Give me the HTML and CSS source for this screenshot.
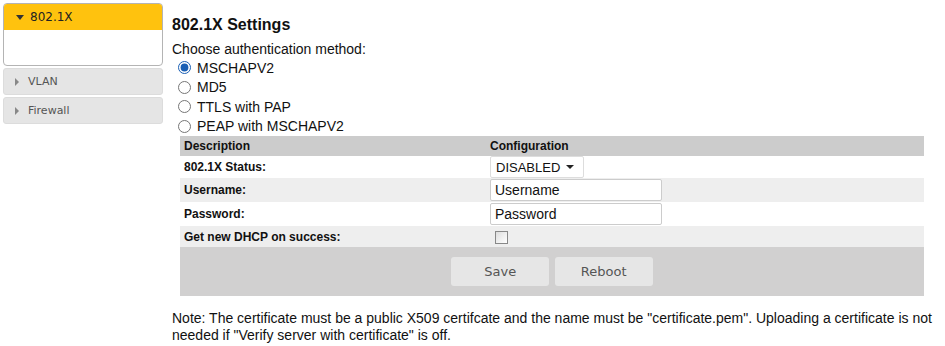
FILE: index.html
```html
<!DOCTYPE html>
<html lang="en">
<head>
    <meta charset="UTF-8">
    <title>802.1X Settings</title>
    <link rel="stylesheet" href="styles.css">
</head>
<body>
    <div class="page">
        <nav class="sidebar">
            <div class="menu open">
                <div class="menu-head"><span class="caret down"></span>802.1X</div>
                <div class="menu-body"></div>
            </div>
            <div class="menu"><div class="menu-head"><span class="caret"></span>VLAN</div></div>
            <div class="menu"><div class="menu-head"><span class="caret"></span>Firewall</div></div>
        </nav>

        <main class="content">
            <h2>802.1X Settings</h2>
            <p class="intro">Choose authentication method:</p>
            <div class="methods">
                <label><input type="radio" name="method" checked> MSCHAPV2</label>
                <label><input type="radio" name="method"> MD5</label>
                <label><input type="radio" name="method"> TTLS with PAP</label>
                <label><input type="radio" name="method"> PEAP with MSCHAPV2</label>
            </div>

            <table class="settings">
                <tr class="head">
                    <th>Description</th>
                    <th>Configuration</th>
                </tr>
                <tr class="row-status">
                    <td>802.1X Status:</td>
                    <td>
                        <div class="select"><span>DISABLED</span><span class="select-arrow"></span></div>
                    </td>
                </tr>
                <tr class="alt">
                    <td>Username:</td>
                    <td><input class="text" type="text" value="Username"></td>
                </tr>
                <tr>
                    <td>Password:</td>
                    <td><input class="text" type="text" value="Password"></td>
                </tr>
                <tr class="alt row-check">
                    <td>Get new DHCP on success:</td>
                    <td><span class="check"></span></td>
                </tr>
                <tr class="actions">
                    <td colspan="2">
                        <button>Save</button>
                        <button>Reboot</button>
                    </td>
                </tr>
            </table>

            <p class="note">Note: The certificate must be a public X509 certifcate and the name must be "certificate.pem". Uploading a certificate is not needed if "Verify server with certificate" is off.</p>
        </main>
    </div>
</body>
</html>
```

FILE: styles.css
```css
* {
    box-sizing: border-box;
}

body {
    margin: 0;
    font-family: "Liberation Sans", Arial, sans-serif;
    color: #111;
    background: #fff;
}

.page {
    display: flex;
    padding: 3px 0 0 3px;
}

/* sidebar */
.sidebar {
    width: 160px;
    flex-shrink: 0;
    display: flex;
    flex-direction: column;
    gap: 2px;
    font-family: "DejaVu Sans", Verdana, sans-serif;
    font-size: 11px;
}

.menu {
    background: #e5e5e5;
    border: 1px solid #dcdcdc;
    border-radius: 3px;
}

.menu-head {
    height: 25px;
    display: flex;
    align-items: center;
    padding-left: 11px;
    color: #555;
}

.menu.open {
    background: #fff;
    border-color: #b4b4b4;
    border-radius: 4px;
    overflow: hidden;
}

.menu.open .menu-head {
    background: #ffc20e;
    color: #222;
    height: 26px;
    font-size: 12px;
}

.menu-body {
    height: 35px;
}

.caret {
    width: 0;
    height: 0;
    border-top: 4px solid transparent;
    border-bottom: 4px solid transparent;
    border-left: 4px solid #888;
    margin-right: 9px;
}

.caret.down {
    border-left: 4px solid transparent;
    border-right: 4px solid transparent;
    border-top: 5px solid #333;
    border-bottom: 0;
    margin-left: 1px;
    margin-right: 6px;
}

/* content */
.content {
    margin-left: 9px;
    flex: 1;
    font-size: 14px;
}

h2 {
    font-size: 16px;
    margin: 13px 0 7px;
}

.intro {
    margin: 0;
    line-height: 17px;
}

.methods {
    display: flex;
    flex-direction: column;
    padding-left: 5px;
}

.methods label {
    height: 19.5px;
    display: flex;
    align-items: center;
}

.methods input {
    width: 13px;
    height: 13px;
    margin: 0 6px 0 1px;
    accent-color: #1a5fb4;
}

.settings {
    margin-left: 8px;
    width: 744px;
    border-collapse: collapse;
    font-size: 12px;
}

.settings th,
.settings td {
    text-align: left;
    padding: 0 4px;
    font-weight: bold;
}

.settings th:first-child,
.settings td:first-child {
    width: 306px;
}

.head {
    background: #ccc;
}

.settings tr {
    height: 24px;
}

.settings tr.head { height: 20px; }
.settings tr.row-status { height: 22px; }
.settings tr.row-check { height: 21px; }

.alt {
    background: #eee;
}

.select {
    display: inline-flex;
    align-items: center;
    justify-content: space-between;
    width: 94px;
    height: 22px;
    padding: 0 9px 0 5px;
    border: 1px solid #ddd;
    border-radius: 2px;
    background: #fff;
    font-size: 13px;
    font-weight: normal;
    vertical-align: middle;
}

.select-arrow {
    width: 0;
    height: 0;
    border-left: 4px solid transparent;
    border-right: 4px solid transparent;
    border-top: 4px solid #222;
}

.text {
    width: 172px;
    height: 22px;
    border: 1px solid #ccc;
    border-radius: 2px;
    padding: 0 4px;
    font-family: "Liberation Sans", Arial, sans-serif;
    font-size: 14px;
    color: #111;
    vertical-align: middle;
}

.check {
    display: inline-block;
    width: 13px;
    height: 13px;
    margin-left: 5px;
    border: 1px solid #888;
    background: linear-gradient(135deg, #ddd, #fff);
    vertical-align: middle;
}

.actions {
    background: #d1d0d0;
}

.settings tr.actions {
    height: 49px;
}

.actions td {
    text-align: center;
}

.actions button {
    width: 98px;
    height: 29px;
    margin: 0 1px;
    border: none;
    border-radius: 3px;
    background: #e6e6e6;
    color: #555;
    font-family: "DejaVu Sans", Verdana, sans-serif;
    font-size: 13px;
}

.note {
    margin: 14px 0 0;
    line-height: 17px;
    color: #111;
}
```
